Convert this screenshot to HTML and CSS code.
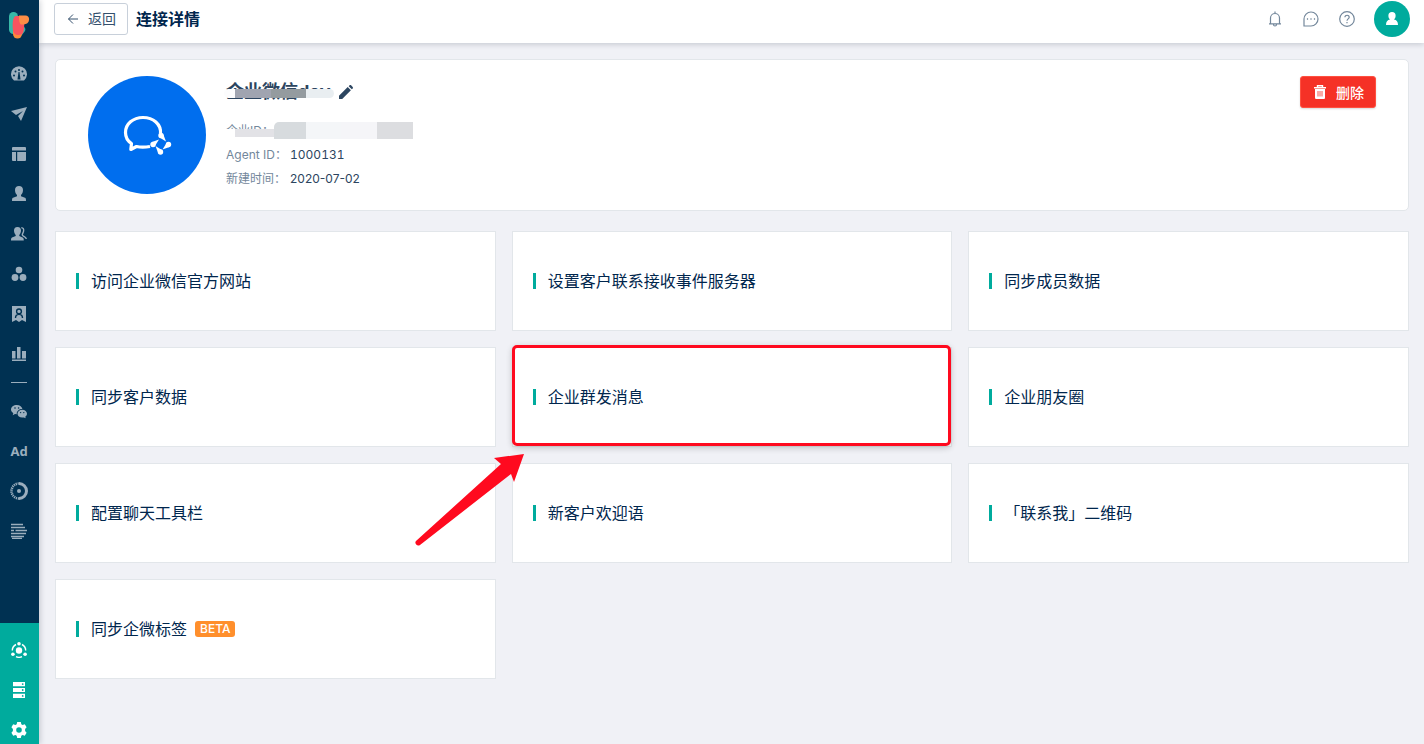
FILE: index.html
```html
<!DOCTYPE html>
<html lang="zh-CN">
<head>
  <meta charset="UTF-8">
  <meta name="viewport" content="width=device-width, initial-scale=1.0">
  <title>连接详情</title>
  <link rel="stylesheet" href="styles.css">
</head>
<body>
  <nav class="sidebar">
    <a href="#" class="logo" aria-label="首页">
      <svg width="22" height="28" viewBox="0 0 22 28">
        <rect x="1" y="1" width="9" height="22" rx="4.500" fill="#39b9a8"/>
        <path d="M12 15h3c2 1 3 3 2 5l-3 4h-4z" fill="#2fb6a5"/>
        <path d="M5 19h9v4a4.500 4.500 0 0 1-9 0z" fill="#fb8b3c"/>
        <path d="M8 5h6c3 0 3 18 0 18-3 2-7 1-8-1-2-3-2-17 2-17z" fill="#f9545f"/>
        <path d="M11 4.500h6.500c4.500 0 4.500 6 1.500 8-2 1-4 1-6 1-2-1-2-6-2-9z" fill="#fd8d45"/>
      </svg>
    </a>

    <a href="#" class="nav-item" aria-label="仪表盘">
      <svg class="icon" viewBox="0 0 16 16">
        <path d="M3 14.500A8 8 0 1 1 13 14.500z"/>
        <g class="cut"><circle cx="3" cy="9.500" r="1"/><circle cx="4.500" cy="5.500" r="1"/><circle cx="8" cy="4" r="1"/><circle cx="11.500" cy="5.500" r="1"/><circle cx="13" cy="9.500" r="1"/><path d="M7.500 6h1l1 7.500h-3z"/></g>
      </svg>
    </a>
    <a href="#" class="nav-item" aria-label="发送">
      <svg class="icon" viewBox="0 0 16 16"><path d="M0 5l16-4-6 14-3-5 5-5-7 4z"/></svg>
    </a>
    <a href="#" class="nav-item" aria-label="页面">
      <svg class="icon" viewBox="0 0 16 16"><path d="M1 2a1 1 0 0 1 1-1h12a1 1 0 0 1 1 1v2.500H1zM1 6h4v9H2a1 1 0 0 1-1-1zM6.200 6H15v8a1 1 0 0 1-1 1H6.200z"/></svg>
    </a>
    <a href="#" class="nav-item" aria-label="用户">
      <svg class="icon" viewBox="0 0 16 16"><path d="M8 0c2.500 0 4 1.600 4 4 0 2.200-.8 4-2 5v1.200l4 1.600c.8.400 1 1 1 3.200H1c0-2.200.2-2.800 1-3.200l4-1.600V9C4.800 8 4 6.200 4 4c0-2.400 1.500-4 4-4z"/></svg>
    </a>
    <a href="#" class="nav-item" aria-label="群组">
      <svg class="icon" viewBox="0 0 16 16">
        <path d="M6.500 1C9 1 10 2.600 10 4.600c0 1.800-.7 3.400-1.700 4.300v1.200l3.300 1.300c.9.400 1.200 1.200 1.200 3.100H0c0-1.900.2-2.700 1-3.100l3.700-1.300V8.900C3.700 8 3 6.400 3 4.600 3 2.600 4 1 6.500 1z"/>
        <path class="line" d="M10.300 1.600c2 .2 2.600 1.400 2.300 3.400-.2 1.800-1.500 2.600-1.300 4 .2 1.300 3.800 1.500 4 4"/>
      </svg>
    </a>
    <a href="#" class="nav-item" aria-label="分组">
      <svg class="icon" viewBox="0 0 16 16"><circle cx="8" cy="4" r="3.300"/><circle cx="4" cy="11.500" r="3.400"/><circle cx="12" cy="11.500" r="3.400"/></svg>
    </a>
    <a href="#" class="nav-item" aria-label="会员">
      <svg class="icon" viewBox="0 0 16 16">
        <path d="M1 0h14v16l-4-2-3 2-3-2-4 2z"/>
        <path class="cut-line" d="M8 3a2.400 2.400 0 1 1 0 4.800A2.400 2.400 0 0 1 8 3zM4.500 12c0-2.500 1.200-3.600 3.500-3.600s3.500 1.100 3.500 3.600"/>
      </svg>
    </a>
    <a href="#" class="nav-item" aria-label="报表">
      <svg class="icon" viewBox="0 0 16 16"><path d="M1 5h3.500v7.500H1zM6 1h3.500v11.500H6zM11 5h4v7.500h-4zM1 13.500h14V15H1z"/></svg>
    </a>
    <hr class="nav-divider">
    <a href="#" class="nav-item" aria-label="微信">
      <svg class="icon" viewBox="0 0 16 16">
        <path d="M5.800 2C9 2 11 4 11.400 6 8 6 5.600 8 5.700 11.200L4 11l-2.300 1.200.6-2C.8 9.300 0 8 0 6.600 0 4 2.600 2 5.800 2z"/>
        <path d="M11.200 6.800c2.800 0 4.800 1.800 4.800 4 0 1.200-.7 2.200-1.700 3l.4 1.500-1.800-.9c-3.500.8-6.400-1-6.400-3.600 0-2.200 2-4 4.700-4z"/>
        <g class="cut"><circle cx="4" cy="5" r=".8"/><circle cx="7.600" cy="5" r=".8"/><circle cx="9.600" cy="9.600" r=".7"/><circle cx="12.800" cy="9.600" r=".7"/></g>
      </svg>
    </a>
    <a href="#" class="nav-item">Ad</a>
    <a href="#" class="nav-item" aria-label="进度">
      <svg class="icon icon-large" viewBox="0 0 18 18">
        <circle cx="9" cy="9" r="2"/>
        <path d="M9 1.500a7.500 7.500 0 0 1 0 15" fill="none" stroke="currentColor" stroke-width="3"/>
        <path d="M9 16.500a7.500 7.500 0 0 1 0-15" fill="none" stroke="currentColor" stroke-width="2.500" stroke-dasharray="1.200 .8"/>
      </svg>
    </a>
    <a href="#" class="nav-item" aria-label="日志">
      <svg class="icon" viewBox="0 0 16 16"><path class="line" d="M0 1.500h12M0 4.500h14M0 7.500h3M4.500 7.500H16M0 10.500h15M0 13.500h13M1 15.500h10"/></svg>
    </a>

    <div class="nav-bottom">
      <a href="#" class="nav-item" aria-label="连接">
        <svg class="icon" viewBox="0 0 16 16">
          <circle cx="8" cy="8.500" r="3.200"/><circle cx="8" cy="1.800" r="1.800"/><circle cx="1.900" cy="12.200" r="1.800"/><circle cx="14.100" cy="12.200" r="1.800"/>
          <path class="line" d="M5 2.500A6.700 6.700 0 0 0 1.300 8.500M11 2.500a6.700 6.700 0 0 1 3.700 6M5 14.700q3 1.300 6 0"/>
        </svg>
      </a>
      <a href="#" class="nav-item" aria-label="数据">
        <svg class="icon" viewBox="0 0 16 16">
          <path d="M2 0h12v4.200H2zM2 5.900h12v4.200H2zM2 11.800h12V16H2z"/>
          <g class="cut"><circle cx="11.700" cy="2.100" r=".9"/><circle cx="11.700" cy="8" r=".9"/><circle cx="11.700" cy="13.900" r=".9"/></g>
        </svg>
      </a>
      <a href="#" class="nav-item" aria-label="设置">
        <svg class="icon" viewBox="0 0 16 16"><path fill-rule="evenodd" d="M6.200 0h3.600l.5 2.200 1.300.8 2.200-.8L15.600 5.300l-1.500 1.600v2.200l1.500 1.600-1.800 3.100-2.200-.8-1.300.8-.5 2.200H6.200l-.5-2.200-1.300-.8-2.200.8L.4 10.700l1.500-1.600V6.900L.4 5.300l1.800-3.100 2.200.8 1.300-.8zM8 5.200a2.800 2.800 0 1 0 0 5.600 2.800 2.800 0 0 0 0-5.600z"/></svg>
      </a>
    </div>
  </nav>

  <div class="page">
    <header class="topbar">
      <button type="button" class="back-btn">
        <svg width="12" height="12" viewBox="0 0 12 12"><path d="M11 6H1.500M6 1.500L1.500 6 6 10.500" fill="none" stroke="currentColor"/></svg>
        返回
      </button>
      <h1>连接详情</h1>
      <div class="tools">
        <button type="button" class="tool-btn" aria-label="通知">
          <svg viewBox="0 0 16 16"><path d="M3.500 12.500V7a4.500 4.500 0 0 1 9 0v5.500M2 12.800h12M6.500 13.500a1.500 1.500 0 0 0 3 0M8 2.500V.5"/></svg>
        </button>
        <button type="button" class="tool-btn" aria-label="消息">
          <svg viewBox="0 0 16 16"><path d="M1 15V8a7 7 0 1 1 7 7zM4.500 7.300v1.400M8 7.300v1.400M11.500 7.300v1.400"/></svg>
        </button>
        <button type="button" class="tool-btn" aria-label="帮助">
          <svg viewBox="0 0 16 16"><circle cx="8" cy="8" r="7.300"/><path d="M5.900 6.300C5.900 3.500 10.300 3.600 10.200 6.300 10.200 7.800 8 8 8 9.700M8 11v1.200"/></svg>
        </button>
        <button type="button" class="avatar" aria-label="账户">
          <svg width="12" height="14" viewBox="0 0 12 14"><path d="M6 0a3.600 3.600 0 0 1 3.600 3.700c0 1.800-.7 3-1.600 3.800 2.600.5 4 2.300 4 5.500H0c0-3.200 1.400-5 4-5.500C3.100 6.700 2.400 5.500 2.400 3.700A3.600 3.600 0 0 1 6 0z" fill="#fff"/></svg>
        </button>
      </div>
    </header>

    <main>
      <section class="summary">
        <div class="summary-logo">
          <svg width="50" height="42" viewBox="0 0 50 42">
            <path d="M38.500 20C39.500 10 31 3.500 21 3.500S3.500 10 3.500 18.500c0 5 2 8.500 6 11l-.7 6 5.700-3c4 1 8 1 13.500 0" fill="none" stroke="#fff" stroke-width="3.200" stroke-linejoin="round"/>
            <g fill="#fff">
              <circle cx="39" cy="21.500" r="2.700"/><path d="M36.800 23L44 27.500l-2.600-7z"/>
              <circle cx="46.500" cy="30.500" r="2.700"/><path d="M45 28.300L40.500 35.500l7-2.600z"/>
              <circle cx="38.500" cy="38" r="2.700"/><path d="M40.700 36.500L33.500 32l2.600 7z"/>
              <circle cx="31" cy="30.500" r="2.700"/><path d="M32.500 32.700L37 25.500l-7 2.600z"/>
            </g>
          </svg>
        </div>
        <div class="summary-info">
          <h2><span class="masked masked-name">企业微信dev</span>
            <button type="button" class="edit-btn" aria-label="编辑">
              <svg width="14" height="14" viewBox="0 0 14 14"><path d="M0 14v-3.200L8.700 2.100l3.200 3.200L3.200 14zM9.700 1.200L10.600.3c.5-.4 1-.4 1.500 0l1.600 1.600c.4.500.4 1 0 1.500l-.9.900z" fill="currentColor"/></svg>
            </button>
          </h2>
          <dl>
            <div class="masked masked-id"><dt>企业ID：</dt><dd></dd></div>
            <div><dt>Agent ID：</dt><dd class="number">1000131</dd></div>
            <div><dt>新建时间：</dt><dd>2020-07-02</dd></div>
          </dl>
        </div>
        <button type="button" class="delete-btn">
          <svg width="12" height="14" viewBox="0 0 12 14"><path d="M3.500 2V.7h5V2M0 2.700h12" fill="none" stroke="#fff" stroke-width="1.400"/><path d="M1 4h10v8.500c0 1-.5 1.500-1.500 1.500h-7C1.500 14 1 13.500 1 12.500z" fill="#fff"/><path d="M4 6v5.500M6 6v5.500M8 6v5.500" stroke="#f5564c"/></svg>
          删除
        </button>
      </section>

      <div class="card-grid">
        <a href="#" class="card"><span class="card-title">访问企业微信官方网站</span></a>
        <a href="#" class="card"><span class="card-title">设置客户联系接收事件服务器</span></a>
        <a href="#" class="card"><span class="card-title">同步成员数据</span></a>
        <a href="#" class="card"><span class="card-title">同步客户数据</span></a>
        <a href="#" class="card highlighted"><span class="card-title">企业群发消息</span>
          <svg class="arrow" width="116" height="96" viewBox="0 0 116 96"><path d="M112 2L102 30 99 22 8 93C5 95 2 91 4 89L89 12 82 6z" fill="#ff0a1f"/></svg>
        </a>
        <a href="#" class="card"><span class="card-title">企业朋友圈</span></a>
        <a href="#" class="card"><span class="card-title">配置聊天工具栏</span></a>
        <a href="#" class="card"><span class="card-title">新客户欢迎语</span></a>
        <a href="#" class="card"><span class="card-title">「联系我」二维码</span></a>
        <a href="#" class="card"><span class="card-title">同步企微标签</span><span class="beta">BETA</span></a>
      </div>
    </main>
  </div>
</body>
</html>
```
FILE: styles.css
```css
* {
  box-sizing: border-box;
}

body {
  margin: 0;
  display: flex;
  height: 100vh;
  overflow: hidden;
  font-family: Inter, "Noto Sans CJK SC", sans-serif;
  font-size: 14px;
  color: #00264d;
  background-color: #f0f1f6;
}

a {
  color: inherit;
  text-decoration: none;
}

button {
  font: inherit;
  color: inherit;
  background: none;
  border: none;
  padding: 0;
  cursor: pointer;
}

svg {
  display: block;
  flex: none;
}

/* Sidebar */
.sidebar {
  display: flex;
  flex-direction: column;
  flex: none;
  width: 39px;
  overflow: hidden;
  color: #9baebd;
  background-color: #003152;
  box-shadow: 1px 0 6px rgba(0, 21, 41, 0.2);
  z-index: 1;
}

.logo {
  display: flex;
  justify-content: center;
  flex: none;
  height: 54px;
  padding: 11px 1px 0 0;
}

.nav-item {
  display: flex;
  align-items: center;
  justify-content: center;
  flex: none;
  height: 40px;
  padding-right: 1px;
  font-family: "Noto Sans", sans-serif;
  font-size: 13px;
  font-weight: 700;
}

.icon {
  width: 16px;
  height: 16px;
  fill: currentColor;
}

.icon-large {
  width: 18px;
  height: 18px;
}

.line {
  fill: none;
  stroke: currentColor;
  stroke-width: 1.4;
}

.cut {
  fill: #003152;
}

.cut-line {
  fill: none;
  stroke: #003152;
  stroke-width: 1.4;
}

.nav-divider {
  flex: none;
  width: 16px;
  height: 1px;
  margin: 8px 11px;
  border: none;
  background-color: #9baebd;
}

.nav-bottom {
  flex: none;
  margin-top: auto;
  height: 121px;
  padding-top: 7px;
  color: #fff;
  background-color: #00ab9d;
}

.nav-bottom .cut {
  fill: #00ab9d;
}

/* Header */
.page {
  flex: 1;
  min-width: 0;
}

.topbar {
  display: flex;
  align-items: center;
  height: 43px;
  padding: 0 14px 5px 15px;
  background-color: #fff;
  box-shadow: 0 1px 6px rgba(0, 21, 41, 0.2);
}

.topbar h1 {
  margin: 0 0 0 8px;
  font-size: 16px;
  line-height: 24px;
}

.back-btn {
  display: flex;
  align-items: center;
  gap: 9px;
  height: 32px;
  padding: 0 11px 0 12px;
  line-height: 20px;
  color: #34506d;
  background-color: #fff;
  border: 1px solid #c8d0da;
  border-radius: 3px;
}

.tools {
  display: flex;
  align-items: center;
  gap: 20px;
  margin-left: auto;
}

.tool-btn svg {
  width: 16px;
  height: 16px;
  fill: none;
  stroke: #73879b;
  stroke-width: 1.2;
}

.avatar {
  display: flex;
  align-items: center;
  justify-content: center;
  width: 36px;
  height: 36px;
  margin-left: -1px;
  border-radius: 50%;
  background-color: #00ab9d;
}

/* Connection summary */
main {
  padding: 16px 15px 16px 16px;
}

.summary {
  display: flex;
  align-items: flex-start;
  padding: 16px 32px;
  background-color: #fff;
  border: 1px solid #e2e6ea;
  border-radius: 5px;
}

.summary-logo {
  display: flex;
  align-items: center;
  justify-content: center;
  width: 118px;
  height: 118px;
  border-radius: 50%;
  background-color: #006eee;
}

.summary-info {
  margin-left: 20px;
}

.summary-info h2 {
  display: flex;
  align-items: center;
  gap: 8px;
  margin: 0;
  font-size: 18px;
  line-height: 32px;
  color: #2c4560;
}

.summary-info dl {
  margin: 11px 0 0;
  font-size: 12px;
  line-height: 24px;
}

.summary-info dl div {
  display: flex;
}

.summary-info dt {
  min-width: 64px;
  color: #73879b;
}

.summary-info dd {
  margin: 0;
  color: #2c4560;
}

.summary-info .number {
  font-variant-numeric: tabular-nums;
}

/* Bars hiding the private values */
.masked {
  position: relative;
}

.masked::after {
  content: "";
  position: absolute;
}

.masked-name::after {
  top: 13px;
  left: -2px;
  width: 110px;
  height: 9px;
  border-radius: 5px;
  background: linear-gradient(90deg, #fcfcfd 11px, #a0a4b0 11px 47px, #949b9f 47px 82px, #e9eef1 82px);
}

.masked-id::before {
  content: "";
  position: absolute;
  top: 10px;
  left: -2px;
  width: 50px;
  height: 8px;
  background: linear-gradient(90deg, #fff 11px, #e2e2e6 11px);
}

.masked-id::after {
  top: 3px;
  left: 48px;
  width: 139px;
  height: 17px;
  border-radius: 5px 0 0 0;
  background: linear-gradient(90deg, #d7dbde 32px, #f4f6f8 32px 67px, #f5f5f8 67px 103px, #dcdde0 103px);
}

.delete-btn {
  display: flex;
  align-items: center;
  gap: 10px;
  height: 32px;
  margin-left: auto;
  padding: 0 11px 0 13px;
  font-weight: 500;
  color: #fff;
  background-color: #f53126;
  border: 1px solid #ff5040;
  border-radius: 3px;
  box-shadow: 0 1px 2px rgba(0, 0, 0, 0.15);
}

/* Feature cards */
.card-grid {
  display: grid;
  grid-template-columns: repeat(3, 1fr);
  gap: 16px;
  margin-top: 20px;
}

.card {
  position: relative;
  display: flex;
  align-items: center;
  height: 100px;
  padding: 0 20px;
  font-size: 16px;
  background-color: #fff;
  border: 1px solid #e2e6ea;
}

.card::before {
  content: "";
  width: 3px;
  height: 16px;
  margin-right: 12px;
  background-color: #00ab9d;
}

.card-title {
  line-height: 24px;
}

.beta {
  margin-left: 8px;
  padding: 0 5px;
  font-size: 12px;
  font-weight: 500;
  line-height: 16px;
  color: #fff;
  background-color: #ff8f2c;
  border-radius: 3px;
}

.highlighted {
  z-index: 1;
}

.highlighted::after {
  content: "";
  position: absolute;
  inset: -3px 0 0 -1px;
  border: 3px solid #ff0a1f;
  border-radius: 5px;
  box-shadow: 0 2px 6px rgba(0, 0, 0, 0.2);
}

.arrow {
  position: absolute;
  top: 104px;
  left: -101px;
}
```
